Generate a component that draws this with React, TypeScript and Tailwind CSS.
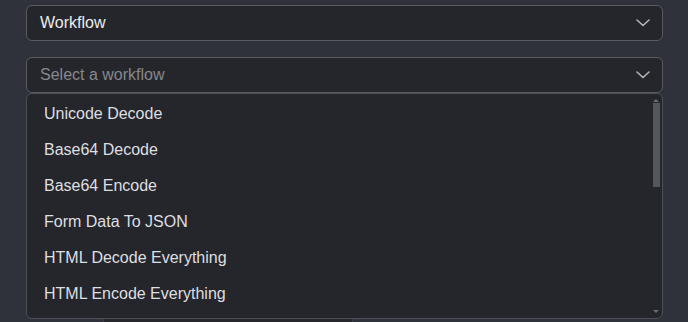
const workflows = [
  'Unicode Decode',
  'Base64 Decode',
  'Base64 Encode',
  'Form Data To JSON',
  'HTML Decode Everything',
  'HTML Encode Everything',
];

function Chevron() {
  return (
    <svg width="14" height="8" viewBox="0 0 14 8" fill="none" className="shrink-0">
      <path d="M1 1l6 5.5L13 1" stroke="#b4b5b8" strokeWidth="1.6" strokeLinecap="round" strokeLinejoin="round" />
    </svg>
  );
}

export default function App() {
  return (
    <div className="h-[322px] w-full overflow-hidden bg-[#2f323a] pl-[26px] pr-[25px] pt-[5px] font-['Liberation_Sans',Arial,sans-serif] text-[16px]">
      <div className="flex h-[36px] items-center justify-between rounded-[6px] border border-[#595b61] bg-[#25262b] pl-[13px] pr-[12px] text-[#ececec]">
        <span>Workflow</span>
        <Chevron />
      </div>

      <div className="relative z-10 mt-[16px]">
        <div className="flex h-[36px] items-center justify-between rounded-[6px] border border-[#595b61] bg-[#25262b] pl-[13px] pr-[12px] text-[#86888d]">
          <span>Select a workflow</span>
          <Chevron />
        </div>

        <div className="absolute left-0 right-0 top-full h-[226px] overflow-hidden rounded-[6px] border border-[#4b4f58] bg-[#25262b]">
          <ul className="pt-[2px]">
            {workflows.map((w) => (
              <li key={w} className="flex h-[36px] items-center pl-[17px] text-[#dedfe1]">
                {w}
              </li>
            ))}
          </ul>

          {/* scrollbar */}
          <div className="absolute right-[3px] top-[5px] h-0 w-0 border-x-[3px] border-b-[3px] border-x-transparent border-b-[#6b6d72]" />
          <div className="absolute right-[2px] top-[9px] h-[84px] w-[7px] bg-[#55575d]" />
          <div className="absolute bottom-[5px] right-[3px] h-0 w-0 border-x-[3px] border-t-[3px] border-x-transparent border-t-[#6b6d72]" />
        </div>
      </div>

      {/* content underneath the open menu */}
      <div className="ml-[77px] mt-[160px] h-[120px] w-[250px] border-x border-[#3b3e45] bg-[#25272c]" />
    </div>
  );
}
